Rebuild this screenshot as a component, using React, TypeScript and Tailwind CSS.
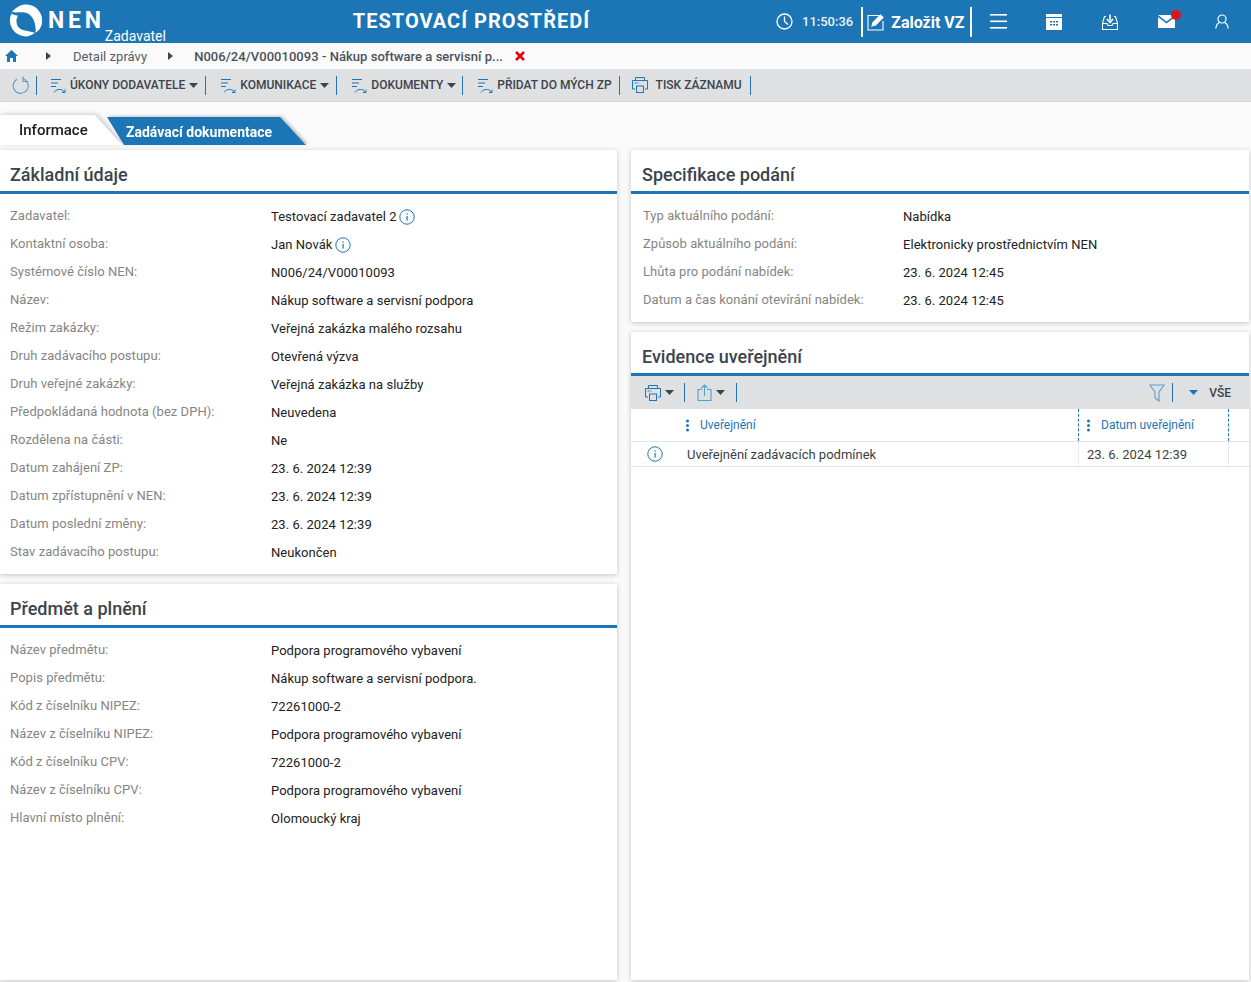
import React from "react";

const Info = ({ size = 16 }: { size?: number }) => (
  <svg width={size} height={size} viewBox="0 0 16 16" fill="none" className="shrink-0">
    <circle cx="8" cy="8" r="7.2" stroke="#1d75b5" strokeWidth="1" />
    <rect x="7.5" y="7" width="1.2" height="4.6" fill="#1d75b5" />
    <rect x="7.5" y="4.4" width="1.2" height="1.3" fill="#1d75b5" />
  </svg>
);

const Caret = ({ color = "#3c444c" }: { color?: string }) => (
  <svg width="9" height="5" viewBox="0 0 9 5" className="shrink-0"><path d="M0 0h9L4.5 5z" fill={color} /></svg>
);

const ActionIcon = () => (
  <svg width="16" height="17" viewBox="0 0 16 17" fill="none" stroke="#1d75b5" strokeWidth="1" className="shrink-0">
    <path d="M1 2.5h10M1 6h7M1 9.5h5" />
    <path d="M4 15.5c1.500-3 6-4 9-2l1.500 2M15 12.500v3h-3" />
  </svg>
);

const Printer = ({ size = 18 }: { size?: number }) => (
  <svg width={size} height={size} viewBox="0 0 18 18" fill="none" stroke="#1d75b5" strokeWidth="1" className="shrink-0">
    <path d="M4.500 4.500v-3h9v3M4 13H1.500V4.500h15V13H14" />
    <rect x="5.500" y="10" width="7" height="6.500" />
    <path d="M3.500 7h2M6.500 7h1" />
  </svg>
);

const Sep = () => <span className="h-[19px] w-px bg-[#1d75b5] shrink-0" />;

const ToolItem = ({ label, caret, print }: { label: string; caret?: boolean; print?: boolean }) => (
  <div className="flex items-center">
    {print ? <Printer /> : <ActionIcon />}
    <span className={`${print ? "ml-[7px]" : "ml-[4px]"} text-[12px] font-medium text-[#3c444c] whitespace-nowrap`}>{label}</span>
    {caret && <span className="ml-[4px]"><Caret /></span>}
  </div>
);

const Row = ({ label, value, info, wide }: { label: string; value: string; info?: boolean; wide?: boolean }) => (
  <div className="flex h-[28px] items-center">
    <div className={`${wide ? "w-[261px]" : "w-[260px]"} shrink-0 text-[13px] tracking-[0.04px] text-[#858585] -translate-y-px`}>{label}</div>
    <div className="flex items-center gap-[3px] text-[13px] tracking-[0.04px] text-[#222]">
      <span>{value}</span>
      {info && <Info />}
    </div>
  </div>
);

const Panel = ({ title, children, className = "", right }: { title: string; children: React.ReactNode; className?: string; right?: boolean }) => (
  <section className={`bg-white shadow-[0_1px_5px_rgba(0,0,0,0.22)] ${className}`}>
    <h2 className={`flex h-[44px] items-end border-b-[3px] border-[#1d75b5] ${right ? "pl-[11px]" : "pl-[10px]"} pb-[3px] text-[18px] leading-[26px] font-medium text-[#3a444d]`}>{title}</h2>
    {children}
  </section>
);

const basic: [string, string, boolean?][] = [
  ["Zadavatel:", "Testovací zadavatel 2", true],
  ["Kontaktní osoba:", "Jan Novák", true],
  ["Systémové číslo NEN:", "N006/24/V00010093"],
  ["Název:", "Nákup software a servisní podpora"],
  ["Režim zakázky:", "Veřejná zakázka malého rozsahu"],
  ["Druh zadávacího postupu:", "Otevřená výzva"],
  ["Druh veřejné zakázky:", "Veřejná zakázka na služby"],
  ["Předpokládaná hodnota (bez DPH):", "Neuvedena"],
  ["Rozdělena na části:", "Ne"],
  ["Datum zahájení ZP:", "23. 6. 2024 12:39"],
  ["Datum zpřístupnění v NEN:", "23. 6. 2024 12:39"],
  ["Datum poslední změny:", "23. 6. 2024 12:39"],
  ["Stav zadávacího postupu:", "Neukončen"],
];

const subject: [string, string][] = [
  ["Název předmětu:", "Podpora programového vybavení"],
  ["Popis předmětu:", "Nákup software a servisní podpora."],
  ["Kód z číselníku NIPEZ:", "72261000-2"],
  ["Název z číselníku NIPEZ:", "Podpora programového vybavení"],
  ["Kód z číselníku CPV:", "72261000-2"],
  ["Název z číselníku CPV:", "Podpora programového vybavení"],
  ["Hlavní místo plnění:", "Olomoucký kraj"],
];

const spec: [string, string][] = [
  ["Typ aktuálního podání:", "Nabídka"],
  ["Způsob aktuálního podání:", "Elektronicky prostřednictvím NEN"],
  ["Lhůta pro podání nabídek:", "23. 6. 2024 12:45"],
  ["Datum a čas konání otevírání nabídek:", "23. 6. 2024 12:45"],
];

const Dots = () => (
  <svg width="3" height="13" viewBox="0 0 3 13" className="shrink-0"><circle cx="1.500" cy="2" r="1.500" fill="#1d75b5" /><circle cx="1.500" cy="6.500" r="1.500" fill="#1d75b5" /><circle cx="1.500" cy="11" r="1.500" fill="#1d75b5" /></svg>
);

export default function App() {
  return (
    <div className="h-[982px] w-[1251px] overflow-hidden bg-[#fafafa] font-['Roboto',sans-serif]">
      {/* Header */}
      <header className="relative flex h-[43px] items-center bg-[#1c75b4] text-white">
        <div className="flex w-[345px] items-center pl-[9px]">
          <svg width="33" height="33" viewBox="0 0 33 33" className="shrink-0 -translate-y-[1px]" fill="#fff">
            <path d="M3 8C7 3 12 .5 17 .5A16 16 0 0 1 31 24.500C29.500 26.500 28 28 26.500 28.500C27.500 18 23 9.500 15.500 8.500C10.500 8 6.500 9 3 8Z" />
            <path d="M2.500 9.500C4.500 11 7 11.500 9 11.500C6 17 7.500 23.500 12.500 25.500C17 27.300 22 27.500 26 28.800C22.500 31.500 19.500 32.500 16.500 32.500A16 16 0 0 1 2.500 9.500Z" />
          </svg>
          <span className="ml-[6px] text-[23px] leading-none font-bold tracking-[3.800px] -translate-y-[1px]">NEN</span>
          <span className="self-end text-[14px] leading-none translate-y-[5px]">Zadavatel</span>
        </div>
        <div className="w-[253px] text-center text-[20px] font-bold tracking-[1px] whitespace-nowrap -translate-y-[1px]">TESTOVACÍ PROSTŘEDÍ</div>
        <div className="ml-[178px] flex items-center">
          <svg width="17" height="17" viewBox="0 0 17 17" fill="none" stroke="#fff" strokeWidth="1.300" className="shrink-0"><circle cx="8.500" cy="8.500" r="7.500" /><path d="M8.500 3.500v5l3.500 3" /></svg>
          <span className="ml-[9px] text-[13px] font-medium text-[#e8f1f8]">11:50:36</span>
          <span className="ml-[8px] h-[30px] w-[2px] bg-white" />
          <svg width="18" height="18" viewBox="0 0 18 18" fill="none" stroke="#fff" strokeWidth="1.100" className="ml-[4px] shrink-0"><path d="M12 2.500H1v14.500h15V8" /><path d="M5 13l1-3.500L13.500 2l2.500 2.500L8.500 12z" fill="#fff" /></svg>
          <span className="ml-[6px] text-[16px] font-bold whitespace-nowrap translate-y-[1px]">Založit VZ</span>
          <span className="ml-[5px] h-[30px] w-[2px] bg-white" />
          <svg width="17" height="15" viewBox="0 0 17 15" className="ml-[18px] shrink-0" fill="#fff"><rect y="0" width="17" height="1.600" /><rect y="6.500" width="17" height="1.600" /><rect y="13" width="17" height="1.600" /></svg>
          <svg width="16" height="16" viewBox="0 0 16 16" className="ml-[39px] shrink-0"><path d="M0 0h16v16H0z" fill="#fff" /><path d="M0 3.500h16" stroke="#1c75b4" /><path d="M4 7h2v1.500H4zM7 7h2v1.500H7zM10 7h2v1.500h-2zM4 10h2v1.500H4zM7 10h2v1.500H7zM10 10h2v1.500h-2z" fill="#1c75b4" /></svg>
          <svg width="16" height="16" viewBox="0 0 16 16" fill="none" stroke="#fff" strokeWidth="1.100" className="ml-[40px] shrink-0"><path d="M4 2.500H2.500L.5 9v6.500h15V9l-2-6.500H12" /><path d="M.5 9.500H5l1 2h4l1-2h4.500" /><path d="M8 .5v6" strokeWidth="1.600" /><path d="M5 5l3 3.500L11 5" strokeWidth="1.600" /></svg>
          <div className="relative ml-[40px] h-[13px] w-[17px] shrink-0">
            <svg width="17" height="13" viewBox="0 0 17 13"><path d="M0 0h17L8.500 6.500zM0 2l8.500 6.500L17 2v11H0z" fill="#fff" /></svg>
            <span className="absolute -right-[6px] -top-[5px] h-[10px] w-[10px] rounded-full bg-[#d9161f]" />
          </div>
          <svg width="14" height="15" viewBox="0 0 14 15" fill="none" stroke="#fff" strokeWidth="1.200" className="ml-[40px] shrink-0"><circle cx="7" cy="5" r="4" /><path d="M.8 14.500c.5-3.500 2-5.500 3.700-6M13.200 14.500c-.5-3.500-2-5.500-3.700-6" /></svg>
        </div>
      </header>

      {/* Breadcrumb */}
      <nav className="flex h-[26px] items-center text-[13px] tracking-[0.04px]">
        <svg width="13" height="12" viewBox="0 0 13 12" className="ml-[5px] shrink-0"><path d="M6.500 0L13 6h-2v6H8V8H5v4H2V6H0z" fill="#1d75b5" /></svg>
        <svg width="5" height="8" viewBox="0 0 5 8" className="ml-[28px] shrink-0"><path d="M0 0l5 4-5 4z" fill="#3c444c" /></svg>
        <span className="ml-[22px] text-[#555d65] translate-y-px">Detail zprávy</span>
        <svg width="5" height="8" viewBox="0 0 5 8" className="ml-[21px] shrink-0"><path d="M0 0l5 4-5 4z" fill="#3c444c" /></svg>
        <span className="ml-[21px] font-medium text-[#4a5159] translate-y-px">N006/24/V00010093 - Nákup software a servisní p...</span>
        <svg width="10" height="10" viewBox="0 0 10 10" className="ml-[12px] shrink-0"><path d="M1 1l8 8M9 1l-8 8" stroke="#e8000d" strokeWidth="2.600" /></svg>
      </nav>

      {/* Toolbar */}
      <div className="flex h-[33px] items-center border-b border-[#d5d6d8] bg-[#dfe0e2]">
        <svg width="17" height="18" viewBox="0 0 17 18" fill="none" stroke="#5b9dcc" strokeWidth="1.100" className="ml-[12px] shrink-0"><path d="M5 3.300A7.500 7.500 0 1 0 11 2.700M11 .5v5h5" /></svg>
        <span className="ml-[7px] flex"><Sep /></span>
        <div className="ml-[13px]"><ToolItem label="ÚKONY DODAVATELE" caret /></div>
        <span className="ml-[7px] flex"><Sep /></span>
        <div className="ml-[14px]"><ToolItem label="KOMUNIKACE" caret /></div>
        <span className="ml-[7px] flex"><Sep /></span>
        <div className="ml-[14px]"><ToolItem label="DOKUMENTY" caret /></div>
        <span className="ml-[6px] flex"><Sep /></span>
        <div className="ml-[14px]"><ToolItem label="PŘIDAT DO MÝCH ZP" /></div>
        <span className="ml-[7px] flex"><Sep /></span>
        <div className="ml-[11px]"><ToolItem label="TISK ZÁZNAMU" print /></div>
        <span className="ml-[8px] flex"><Sep /></span>
      </div>

      {/* Tabs */}
      <div className="flex h-[43px] items-end">
        <div className="[filter:drop-shadow(2px_-1px_2px_rgba(0,0,0,0.18))]">
          <div className="h-[30px] w-[122px] bg-white pl-[19px] pt-[4px] text-[15px] font-medium text-[#1c1c1c] [clip-path:polygon(0_0,95px_0,122px_30px,0_30px)]">Informace</div>
        </div>
        <div className="-ml-[15px] [filter:drop-shadow(2px_-1px_1.500px_rgba(0,0,0,0.22))]">
          <div className="flex h-[28px] w-[200px] items-center pl-[19px] text-[14px] font-bold text-white bg-[#1c75b4] [clip-path:polygon(0_0,173px_0,199px_28px,17px_28px)]"><span className="translate-y-px">Zadávací dokumentace</span></div>
        </div>
      </div>

      {/* Main */}
      <main className="flex h-[835px] gap-[14px] pt-[5px]">
        <div className="flex h-[830px] w-[617px] flex-col gap-[10px]">
          <Panel title="Základní údaje" className="h-[424px]">
            <div className="px-[10px] pt-[9px]">
              {basic.map(([l, v, i]) => <Row key={l} label={l} value={v} info={i} wide />)}
            </div>
          </Panel>
          <Panel title="Předmět a plnění" className="flex-1">
            <div className="px-[10px] pt-[9px]">
              {subject.map(([l, v]) => <Row key={l} label={l} value={v} wide />)}
            </div>
          </Panel>
        </div>
        <div className="flex h-[830px] w-[618px] flex-col gap-[10px]">
          <Panel title="Specifikace podání" className="h-[172px]" right>
            <div className="px-[12px] pt-[9px]">
              {spec.map(([l, v]) => <Row key={l} label={l} value={v} />)}
            </div>
          </Panel>
          <Panel title="Evidence uveřejnění" className="flex-1" right>
            <div className="flex h-[33px] items-center bg-[#dfe0e2] pl-[13px]">
              <Printer size={18} />
              <span className="ml-[3px]"><Caret /></span>
              <span className="ml-[10px] flex"><Sep /></span>
              <svg width="15" height="17" viewBox="0 0 15 17" fill="none" stroke="#5b9dcc" strokeWidth="1.100" className="ml-[12px] shrink-0"><path d="M5 5.500H1v11h13v-11h-4M7.500 12V1M4.500 4l3-3 3 3" /></svg>
              <span className="ml-[4px]"><Caret /></span>
              <span className="ml-[11px] flex"><Sep /></span>
              <svg width="16" height="18" viewBox="0 0 16 18" fill="none" stroke="#5b9dcc" strokeWidth="1.100" className="ml-auto shrink-0"><path d="M.8 1h14.400L10 8v9l-4-3V8z" /></svg>
              <span className="ml-[7px] flex"><Sep /></span>
              <span className="ml-[16px]"><Caret color="#1d75b5" /></span>
              <span className="ml-[11px] mr-[18px] text-[12px] font-medium text-[#3c444c]">VŠE</span>
            </div>
            <div className="flex h-[33px] border-b border-[#dfe7ec] text-[12px] text-[#1d75b5]">
              <div className="flex w-[447px] items-center pl-[55px]"><Dots /><span className="ml-[11px]">Uveřejnění</span></div>
              <div className="flex w-[151px] items-center border-x border-dashed border-[#1d75b5] pl-[8px]"><Dots /><span className="ml-[11px]">Datum uveřejnění</span></div>
            </div>
            <div className="flex h-[25px] border-b border-[#dfe7ec] text-[13px] text-[#3a3f44]">
              <div className="flex w-[447px] items-center pl-[16px]"><Info /><span className="ml-[24px] translate-y-px">Uveřejnění zadávacích podmínek</span></div>
              <div className="flex w-[151px] items-center border-x border-dotted border-[#d5dbe0] pl-[8px]"><span className="translate-y-px">23. 6. 2024 12:39</span></div>
            </div>
          </Panel>
        </div>
      </main>
    </div>
  );
}
